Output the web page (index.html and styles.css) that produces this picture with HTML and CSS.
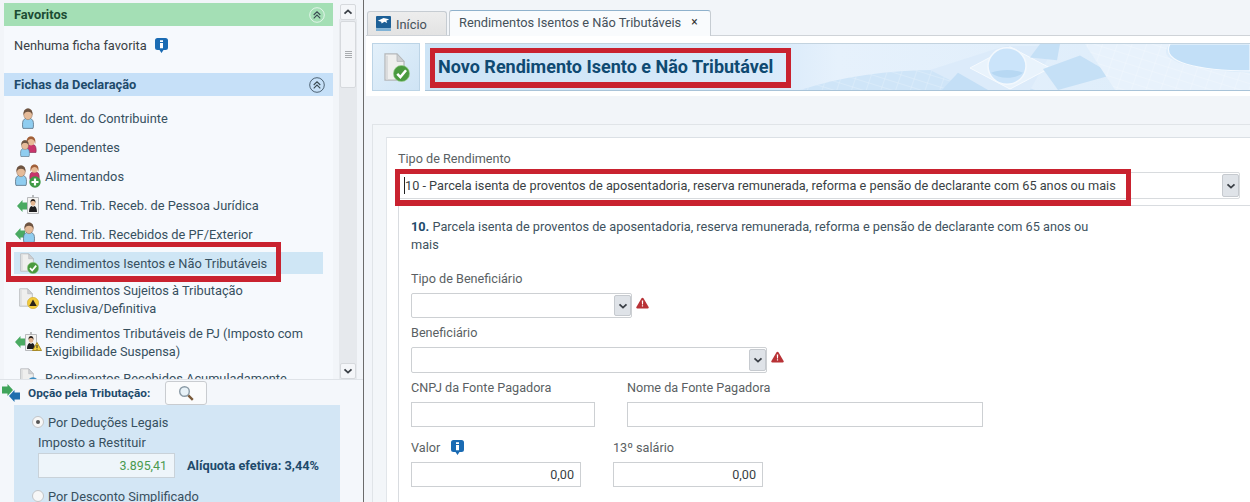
FILE: index.html
```html
<!DOCTYPE html>
<html lang="pt-BR">
<head>
<meta charset="utf-8">
<title>Novo Rendimento Isento e Não Tributável</title>
<link rel="stylesheet" href="styles.css">
</head>
<body>
<svg class="defs" width="0" height="0" aria-hidden="true">
  <defs>
    <symbol id="person" viewBox="0 0 12 21">
      <path d="M1 20.400c-.6-1-.7-6 0-7.500.6-1.300 2-2.400 3-2.600h4c1 .2 2.400 1.300 3 2.600.7 1.500.6 6.500 0 7.500z" fill="#8fcdf0" stroke="#5a7184" stroke-width=".8"/>
      <ellipse cx="6" cy="6.300" rx="4.300" ry="5.400" fill="#e5bb99" stroke="#8b6b55" stroke-width=".5"/>
      <path d="M1.700 7C1 2.500 3.300.4 6 .4s5 2.100 4.300 6.600C9.800 4.400 8.300 3.700 6 3.700S2.300 4.400 1.700 7z" fill="#6d5442"/>
    </symbol>
    <symbol id="woman" viewBox="0 0 12 17">
      <path d="M1 16.500c-.5-2.500 0-6 1-7 .8-.8 2-1 3-1h2c1 0 2.200.2 3 1 1 1 1.500 4.500 1 7z" fill="#c8356b" stroke="#7d2a4e" stroke-width=".6"/>
      <ellipse cx="6" cy="5" rx="3.800" ry="4.400" fill="#e8bb97"/>
      <path d="M1.900 8.500C.7 3 3 .4 6 .4s5.300 2.600 4.100 8.100C10.100 5.500 9.300 3.500 6 3 3 3.300 2.100 5.500 1.900 8.500z" fill="#a0603a"/>
    </symbol>
    <symbol id="doc" viewBox="0 0 15 20">
      <path d="M.7.700h8.600l5 5.300v13.300H.7z" fill="#efefee" stroke="#b5b8ba" stroke-width=".9"/>
      <path d="M9.300.7v5.300h5z" fill="#cfd1d3" stroke="#b5b8ba" stroke-width=".6"/>
      <path d="M1.500 2v17h1.300V2z" fill="#d9dadb"/>
    </symbol>
    <symbol id="check" viewBox="0 0 12 12">
      <circle cx="6" cy="6" r="5.700" fill="#4a9a3f" stroke="#9ccf92" stroke-width=".5"/>
      <path d="M3 6.200l2.200 2.300L9.200 3.700" fill="none" stroke="#fff" stroke-width="1.800"/>
    </symbol>
    <symbol id="plus" viewBox="0 0 12 12">
      <circle cx="6" cy="6" r="5.700" fill="#3f9a46"/>
      <path d="M6 2.500v7M2.500 6h7" stroke="#fff" stroke-width="2.200"/>
    </symbol>
    <symbol id="warny" viewBox="0 0 12 12">
      <circle cx="6" cy="6" r="5.700" fill="#f2cb3c" stroke="#c79f1f" stroke-width=".5"/>
      <path d="M6 2.500L9.700 9H2.300z" fill="#2b2418"/>
    </symbol>
    <symbol id="tri" viewBox="0 0 10 9">
      <path d="M5 .5l4.500 8H.5z" fill="#f4d23f" stroke="#9a7a12" stroke-width=".8"/>
      <path d="M5 3v3M5 6.800v.8" stroke="#222" stroke-width="1"/>
    </symbol>
    <symbol id="arrow" viewBox="0 0 10 12">
      <path d="M0 6l5.500-6v2.500H10v7H5.500V12z" fill="#4aaa62"/>
    </symbol>
    <symbol id="idcard" viewBox="0 0 12 19">
      <path d="M5 0h2v3H5z" fill="#b9bcbe"/>
      <path d="M.5 2.500h11v16H.5z" fill="#f3f3f1" stroke="#a8abad" stroke-width=".8"/>
      <ellipse cx="6" cy="8" rx="2.300" ry="2.800" fill="#e3b691"/>
      <path d="M3.600 8C3.200 5 4.500 4 6 4s2.800 1 2.400 4c-.5-1.800-1.200-2-2.400-2s-1.900.2-2.400 2z" fill="#2a211d"/>
      <path d="M2 17c0-3.500 1-5.500 2.500-6l1.500 1 1.500-1c1.500.5 2.500 2.500 2.500 6z" fill="#1d1d1f"/>
    </symbol>
    <symbol id="blueball" viewBox="0 0 12 12">
      <circle cx="6" cy="6" r="5.700" fill="#3b8dc4"/>
      <circle cx="6" cy="6" r="2.500" fill="#d9ecf7"/>
    </symbol>
    <symbol id="info" viewBox="0 0 13 15">
      <path d="M2.500 0h8A2.500 2.500 0 0 1 13 2.500v7A2.500 2.500 0 0 1 10.500 12H8.500l-2 3-2-3h-2A2.500 2.500 0 0 1 0 9.500v-7A2.500 2.500 0 0 1 2.500 0z" fill="#1a6bb3"/>
      <path d="M5 2.200h3v1.800H5zM5 5h3v5.200H5z" fill="#fff"/>
    </symbol>
    <symbol id="alert" viewBox="0 0 13 12">
      <path d="M6.500.8c.5 0 .8.200 1.100.7l5 8.600c.4.800 0 1.400-.8 1.400H1.200c-.8 0-1.200-.6-.8-1.400l5-8.600c.3-.5.600-.7 1.100-.7z" fill="#b83236"/>
      <path d="M5.800 3.500h1.400l-.2 4H6zM5.900 8.300h1.200v1.300H5.900z" fill="#fff"/>
    </symbol>
    <symbol id="chev" viewBox="0 0 10 6">
      <path d="M1.500 1.300L5 4.600l3.500-3.300" fill="none" stroke="#3a3f46" stroke-width="1.800"/>
    </symbol>
    <symbol id="dbl" viewBox="0 0 16 16">
      <circle cx="8" cy="8" r="7.300" fill="none" stroke="currentColor" stroke-width=".9"/>
      <path d="M4.700 8l3.300-3.200L11.300 8M4.700 11.300L8 8.100l3.300 3.200" fill="none" stroke="#3a4a52" stroke-width="1.100"/>
    </symbol>
  </defs>
</svg>

<div class="app">
  <aside class="side">
    <div class="nav-area">
      <div class="tree">
        <section class="panel">
          <h2 class="head head-green">Favoritos<svg class="dbl dbl-light"><use href="#dbl"/></svg></h2>
          <div class="fav"><span>Nenhuma ficha favorita</span><svg class="ico-info"><use href="#info"/></svg></div>
          <h2 class="head head-blue">Fichas da Declaração<svg class="dbl dbl-dark"><use href="#dbl"/></svg></h2>
          <ul class="list">
            <li class="row"><svg class="ri" viewBox="0 0 31 26"><use href="#person" x="8" y="3" width="12" height="21"/></svg>Ident. do Contribuinte</li>
            <li class="row"><svg class="ri" viewBox="0 0 31 26"><use href="#woman" x="11" y="2" width="12" height="17"/><use href="#person" x="6" y="6" width="10" height="17"/></svg>Dependentes</li>
            <li class="row"><svg class="ri" viewBox="0 0 31 26"><use href="#person" x="1" y="2" width="12" height="21"/><use href="#woman" x="15" y="1" width="11" height="16"/><use href="#plus" x="15" y="13" width="12" height="12"/></svg>Alimentandos</li>
            <li class="row"><svg class="ri" viewBox="0 0 31 26"><use href="#arrow" x="3" y="8" width="10" height="12"/><use href="#idcard" x="13" y="3" width="12" height="19"/></svg>Rend. Trib. Receb. de Pessoa Jurídica</li>
            <li class="row"><svg class="ri" viewBox="0 0 31 26"><use href="#arrow" x="1" y="7" width="10" height="12"/><use href="#person" x="9" y="1" width="12" height="21"/></svg>Rend. Trib. Recebidos de PF/Exterior</li>
            <li class="row row-on"><svg class="ri" viewBox="0 0 31 26"><use href="#doc" x="6" y="3" width="14" height="19"/><use href="#check" x="13" y="12" width="12" height="12"/></svg>Rendimentos Isentos e Não Tributáveis</li>
            <li class="row"><svg class="ri" viewBox="0 0 31 26"><use href="#doc" x="5" y="2" width="14" height="19"/><use href="#warny" x="13" y="11" width="12" height="12"/></svg><span>Rendimentos Sujeitos à Tributação<br>Exclusiva/Definitiva</span></li>
            <li class="row"><svg class="ri" viewBox="0 0 31 26"><use href="#arrow" x="1" y="7" width="10" height="12"/><use href="#idcard" x="11" y="3" width="12" height="19"/><use href="#tri" x="18" y="13" width="10" height="9"/></svg><span>Rendimentos Tributáveis de PJ (Imposto com<br>Exigibilidade Suspensa)</span></li>
            <li class="row"><svg class="ri" viewBox="0 0 31 26"><use href="#doc" x="6" y="3" width="14" height="19"/><use href="#blueball" x="13" y="12" width="12" height="12"/></svg>Rendimentos Recebidos Acumuladamente</li>
          </ul>
        </section>
      </div>
      <div class="scroll">
        <div class="sbtn"><svg class="chev chev-up"><use href="#chev"/></svg></div>
        <div class="thumb"><i></i><i></i><i></i><i></i></div>
        <div class="track"></div>
        <div class="sbtn"><svg class="chev"><use href="#chev"/></svg></div>
      </div>
    </div>
    <div class="tax">
      <div class="tax-top">
        <svg class="tax-ico" viewBox="0 0 18 18"><path d="M0 2.500h5.500V0L11 6l-5.500 6V9.500H0z" fill="#3fa45a"/><path d="M18 8.500h-5.500V6L7 12l5.500 6v-2.500H18z" fill="#1f6fae"/></svg>
        <strong class="tax-title">Opção pela Tributação:</strong>
        <div class="lens-btn"><svg class="lens" viewBox="0 0 16 16"><circle cx="6.500" cy="6.500" r="4.800" fill="#e8f2f8" stroke="#8a9aa5" stroke-width="1.400"/><path d="M10.300 10.300l4.500 4.500" stroke="#7a5a3a" stroke-width="2.400"/></svg></div>
      </div>
      <div class="tax-box">
        <div class="radio-line"><span class="radio radio-on"></span>Por Deduções Legais</div>
        <div class="tax-label">Imposto a Restituir</div>
        <div class="tax-val"><div class="tax-input">3.895,41</div><strong class="rate">Alíquota efetiva: 3,44%</strong></div>
        <div class="radio-line radio-second"><span class="radio"></span>Por Desconto Simplificado</div>
      </div>
    </div>
  </aside>

  <main class="main">
    <div class="tabs">
      <div class="tab tab-home">
        <svg class="logo" viewBox="0 0 16 16"><rect width="16" height="13" rx="1" fill="#1c5f96"/><path d="M0 13h16v3H0z" fill="#7fb2d6"/><path d="M2 5l6-3 6 1.500-3 1.500 1 2.500-3-1.500-3 2-.5-2z" fill="#fff"/></svg>
        <span class="tab-text">Início</span>
      </div>
      <div class="tab tab-on">Rendimentos Isentos e Não Tributáveis<span class="close">×</span></div>
    </div>
    <div class="band">
      <div class="band-ico"><svg class="band-svg" viewBox="0 0 28 32"><use href="#doc" x="2" y="1" width="21" height="28"/><use href="#check" x="11" y="13" width="17" height="17"/></svg></div>
      <div class="banner">
        <svg class="banner-art" viewBox="0 0 825 48" preserveAspectRatio="none" aria-hidden="true">
          <defs>
            <linearGradient id="bg" x1="0" x2="1" y1="0" y2="0"><stop offset="0" stop-color="#cde4f6"/><stop offset=".42" stop-color="#d9eafa"/><stop offset=".5" stop-color="#e6f1fc"/><stop offset="1" stop-color="#dcecfa"/></linearGradient>
            <pattern id="mesh" width="14" height="9" patternUnits="userSpaceOnUse" patternTransform="rotate(18)"><path d="M0 0h14M0 0v9" stroke="#fff" stroke-width=".7" opacity=".55"/></pattern>
          </defs>
          <rect width="825" height="48" fill="url(#bg)"/>
          <path d="M375 48c40-14 90-21 135-21 40 0 70 8 100 21z" fill="#cfe5f8"/>
          <path d="M375 48c40-14 90-21 135-21 40 0 70 8 100 21z" fill="url(#mesh)"/>
          <path d="M505 27l75-25 50 0-25 46h-60z" fill="#dcebfa"/>
          <path d="M545 25l40-22 40 22-40 22z" fill="#e9f3fc" stroke="#f6fafe" stroke-width="1"/>
          <circle cx="582" cy="23" r="19" fill="#cbe4fa" stroke="#f3f8fd" stroke-width="1.500"/>
          <path d="M566 30c10-4 22-4 32 0-8 7-24 7-32 0z" fill="#b7d8f3"/>
          <path d="M533 30l30 18h-46z" fill="#c4dff6"/>
          <path d="M615 0h20l-3 17-27-3z" fill="#c5e0f6"/>
          <path d="M618 26l37-14 33 20-55 16z" fill="#c5e0f6"/>
          <path d="M660 0h85c-12 12 0 26 80 30v18H690z" fill="#e8f2fc"/>
          <path d="M660 0h85c-12 12 0 26 80 30v18H690z" fill="url(#mesh)"/>
          <path d="M745 0h80v28c-52 0-90-9-80-28z" fill="#c2dff7" stroke="#f4f9fe" stroke-width="1.200"/>
        </svg>
        <h1 class="title">Novo Rendimento Isento e Não Tributável</h1>
      </div>
    </div>
    <div class="form-outer">
      <div class="form-card">
        <div class="label label-top">Tipo de Rendimento</div>
        <div class="combo combo-top">
          <div class="combo-text"><span class="caret"></span>10 - Parcela isenta de proventos de aposentadoria, reserva remunerada, reforma e pensão de declarante com 65 anos ou mais</div>
          <div class="combo-btn"><svg class="chev"><use href="#chev"/></svg></div>
        </div>
        <div class="inner">
          <p class="desc"><b>10.</b> Parcela isenta de proventos de aposentadoria, reserva remunerada, reforma e pensão de declarante com 65 anos ou mais</p>
          <div class="label">Tipo de Beneficiário</div>
          <div class="with-alert f-a">
            <div class="combo combo-a"><div class="combo-text"></div><div class="combo-btn"><svg class="chev"><use href="#chev"/></svg></div></div>
            <svg class="ico-alert"><use href="#alert"/></svg>
          </div>
          <div class="label">Beneficiário</div>
          <div class="with-alert f-b">
            <div class="combo combo-b"><div class="combo-text"></div><div class="combo-btn"><svg class="chev"><use href="#chev"/></svg></div></div>
            <svg class="ico-alert"><use href="#alert"/></svg>
          </div>
          <div class="cols f-c">
            <div class="col-cnpj"><div class="label">CNPJ da Fonte Pagadora</div><div class="input w-cnpj"></div></div>
            <div><div class="label">Nome da Fonte Pagadora</div><div class="input w-nome"></div></div>
          </div>
          <div class="cols">
            <div class="col-valor"><div class="label">Valor<svg class="ico-info ico-info-v"><use href="#info"/></svg></div><div class="input num w-valor">0,00</div></div>
            <div><div class="label">13º salário</div><div class="input num w-13">0,00</div></div>
          </div>
        </div>
      </div>
    </div>
  </main>
</div>

<div class="mark mark-side"></div>
<div class="mark mark-title"></div>
<div class="mark mark-select"></div>
</body>
</html>
```
FILE: styles.css
```css
* { box-sizing: border-box; }
html, body { margin: 0; padding: 0; height: 502px; overflow: hidden; }
body {
  position: relative;
  background: #f2f5f9;
  font-family: Roboto, "Liberation Sans", sans-serif;
  font-size: 12.8px;
  color: #3d4a54;
}
.defs { position: absolute; }
svg { display: block; }

.app { display: flex; height: 502px; }

/* Sidebar */
.side {
  width: 364px;
  flex: none;
  display: flex;
  flex-direction: column;
  border-right: 1px solid #6b6b6b;
}
.nav-area { display: flex; height: 379px; flex: none; }
.tree { width: 339px; padding: 3px 6px 0 4px; overflow: hidden; flex: none; }
.panel { background: #f6f9fd; height: 376px; overflow: hidden; }
.head {
  margin: 0;
  height: 23px;
  padding: 0 8px 0 10px;
  display: flex;
  align-items: center;
  justify-content: space-between;
  font-size: 12.8px;
  font-weight: 700;
}
.head-green { background: #a4dfb5; color: #1c4c33; }
.head-blue { background: #c6e0f8; color: #1e4a6b; }
.dbl { width: 16px; height: 16px; }
.dbl-light { color: #e9f7ee; }
.dbl-dark { color: #3f5364; }
.fav {
  height: 47px;
  padding: 0 0 8px 10px;
  display: flex;
  align-items: center;
  gap: 8px;
  color: #3a3f44;
}
.ico-info { width: 13px; height: 15px; flex: none; }
.list { list-style: none; margin: 0; padding: 11px 10px 0; }
.row {
  display: flex;
  align-items: center;
  min-height: 22px;
  padding-top: 1px;
  margin-bottom: 7px;
  line-height: 17.5px;
  color: #37505f;
  white-space: nowrap;
}
.row-on { background: #cfe6f5; }
.ri { width: 31px; height: 26px; flex: none; margin: -3px 0 -2px; overflow: visible; }

/* Scrollbar */
.scroll {
  width: 18px;
  flex: none;
  padding-top: 4px;
  display: flex;
  flex-direction: column;
  align-items: stretch;
  background: linear-gradient(#f2f5f9 0, #f2f5f9 19px, #e6e9ed 19px);
}
.sbtn {
  height: 16px;
  margin: 0 1px;
  background: #f4f6f9;
  border: 1px solid #d6d9dd;
  border-radius: 2px;
  display: flex;
  align-items: center;
  justify-content: center;
  flex: none;
}
.chev { width: 10px; height: 6px; }
.chev-up { transform: rotate(180deg); }
.thumb {
  height: 67px;
  margin: 1px 1px 0;
  background: #f3f5f8;
  border: 1px solid #d6d9dd;
  border-radius: 2px;
  display: flex;
  flex-direction: column;
  align-items: center;
  justify-content: center;
  gap: 1px;
  flex: none;
}
.thumb i { display: block; width: 7px; height: 1px; background: #a8abae; }
.track { flex: 1; }

/* Opção pela Tributação */
.tax {
  flex: 1;
  border-top: 1px solid #dfe3e8;
  background: #f4f7fb;
  min-height: 0;
}
.tax-top { display: flex; align-items: center; height: 25px; padding-left: 2px; }
.tax-ico { width: 18px; height: 18px; flex: none; }
.tax-title { margin-left: 8px; width: 137px; font-size: 11.8px; color: #1e4a6b; white-space: nowrap; }
.lens-btn {
  width: 42px;
  height: 24px;
  background: #fafbfc;
  border: 1px solid #c9ccd0;
  border-radius: 3px;
  display: flex;
  align-items: center;
  justify-content: center;
}
.lens { width: 16px; height: 16px; }
.tax-box {
  margin-left: 14px;
  width: 326px;
  height: 97px;
  background: #d3e6f5;
  padding: 8px 0 0 18px;
  overflow: hidden;
}
.radio-line { display: flex; align-items: center; height: 18px; color: #37505f; }
.radio-second { margin-top: 9px; }
.radio {
  width: 12px;
  height: 12px;
  border-radius: 50%;
  background: #f7f7f7;
  border: 1px solid #c2c5c8;
  margin-right: 4px;
  flex: none;
  position: relative;
}
.radio-on::after {
  content: "";
  position: absolute;
  left: 3px;
  top: 3px;
  width: 4px;
  height: 4px;
  border-radius: 50%;
  background: #555;
}
.tax-label { margin: 4px 0 0 6px; height: 16px; line-height: 16px; color: #37505f; }
.tax-val { display: flex; align-items: center; margin: 2px 0 0 6px; }
.tax-input {
  width: 137px;
  height: 25px;
  line-height: 23px;
  padding-right: 7px;
  text-align: right;
  font-size: 12.4px;
  color: #4a9a4f;
  background: #eef5fa;
  border: 1px solid #c9d2d9;
}
.rate { margin-left: 12px; font-size: 12.8px; color: #1e4a6b; white-space: nowrap; }

/* Main */
.main { flex: 1; min-width: 0; padding-left: 2px; }
.tabs {
  height: 36px;
  padding: 11px 0 0 1px;
  display: flex;
  align-items: flex-end;
  gap: 2px;
  border-bottom: 1px solid #cfd3d8;
}
.tab {
  display: flex;
  align-items: center;
  height: 25px;
  border: 1px solid #c6ccd2;
  border-bottom: 0;
  border-radius: 3px 3px 0 0;
  white-space: nowrap;
  color: #45515a;
}
.tab-home {
  width: 80px;
  height: 24px;
  padding-left: 8px;
  gap: 5px;
  background: linear-gradient(#ededed, #e3e3e3);
}
.tab-text { padding-top: 2px; }
.logo { width: 15px; height: 15px; flex: none; }
.tab-on {
  width: 262px;
  padding-left: 9px;
  background: #f9fbfd;
  border-top-color: #8fb1cc;
  padding-bottom: 3px;
  margin-bottom: -1px;
  height: 26px;
}
.close { margin-left: 10px; font-size: 12px; color: #333; }
.band {
  height: 60px;
  background: #fff;
  padding: 7px 0 5px 6px;
  display: flex;
  gap: 5px;
}
.band-ico {
  width: 48px;
  height: 48px;
  flex: none;
  background: linear-gradient(135deg, #e3f0fa, #cfe4f5);
  border: 1px solid #bcd4e6;
  display: flex;
  align-items: center;
  justify-content: center;
}
.band-svg { width: 28px; height: 32px; margin-top: 2px; }
.banner {
  flex: 1;
  height: 48px;
  position: relative;
  display: flex;
  align-items: center;
  padding-left: 13px;
  overflow: hidden;
  border-top: 1px solid #c3d3df;
  border-bottom: 1px solid #a9c3d8;
}
.banner-art { position: absolute; left: 0; top: 0; width: 100%; height: 100%; }
.title {
  position: relative;
  margin: 0 0 2px;
  font-size: 18px;
  font-weight: 700;
  color: #0f4a72;
  white-space: nowrap;
}

/* Form */
.form-outer {
  margin: 28px 0 0 6px;
  padding: 12px 0 0 13px;
  border-top: 1px solid #e0e4e8;
  border-left: 1px solid #e0e4e8;
  background: #f3f6f9;
  height: 378px;
  font-size: 12.65px;
}
.form-card {
  height: 100%;
  background: #fff;
  padding-top: 13px;
  padding-left: 11px;
  border-top: 1px solid #dbe0e5;
  border-left: 1px solid #e2e6ea;
}
.label {
  height: 16px;
  line-height: 16px;
  padding-top: 2px;
  color: #5a5f63;
  display: flex;
  align-items: center;
  white-space: nowrap;
}
.label .ico-info { margin-top: -2px; }
.label-top { margin-bottom: 5px; padding-top: 0; }
.combo {
  display: flex;
  height: 26px;
  background: #fff;
  border: 1px solid #cdd0d3;
  border-radius: 2px;
}
.combo-top { width: 842px; height: 27px; border-color: #d8dbde; }
.combo-text { flex: 1; position: relative; padding-left: 6px; font-size: 12.72px; line-height: 25px; color: #3a3f44; white-space: nowrap; }
.caret { position: absolute; left: 5px; top: 4px; width: 1px; height: 17px; background: #222; }
.combo-btn {
  width: 17px;
  margin: 1px 0;
  background: #dfe3e8;
  border: 1px solid #c6cacf;
  border-radius: 2px;
  display: flex;
  align-items: center;
  justify-content: center;
  flex: none;
}
.inner {
  margin-top: 6px;
  border-top: 1px solid #d9dce0;
  border-left: 1px solid #d9dce0;
  padding: 12px 0 0 12px;
  height: 300px;
}
.desc { margin: 0 0 16px; width: 685px; font-size: 12.73px; line-height: 18px; color: #40525e; }
.desc b { color: #1e4a6b; }
.with-alert { display: flex; align-items: flex-start; margin-top: 7px; }
.combo-a { width: 221px; height: 25px; }
.combo-b { width: 356px; }
.f-a { margin-bottom: 6px; }
.f-b { margin-bottom: 6px; }
.ico-alert { width: 13px; height: 12px; margin: 4px 0 0 4px; flex: none; }
.cols { display: flex; }
.f-c { margin-bottom: 12px; }
.col-cnpj { width: 216px; }
.col-valor { width: 202px; }
.input {
  margin-top: 7px;
  height: 25px;
  line-height: 23px;
  border: 1px solid #cdd0d3;
  background: #fff;
}
.num { text-align: right; padding-right: 6px; color: #3a3f44; }
.w-cnpj { width: 184px; }
.w-nome { width: 356px; }
.w-valor { width: 170px; }
.w-13 { width: 150px; }
.ico-info-v { margin-left: 11px; }

/* Red annotation boxes drawn over the screenshot */
.mark {
  position: absolute;
  border: 5px solid #c9222f;
  border-bottom-width: 6px;
  pointer-events: none;
}
.mark-side { left: 6px; top: 242px; width: 275px; height: 40px; }
.mark-title { left: 430px; top: 48px; width: 361px; height: 40px; }
.mark-select { left: 395px; top: 169px; width: 736px; height: 37px; }
```
